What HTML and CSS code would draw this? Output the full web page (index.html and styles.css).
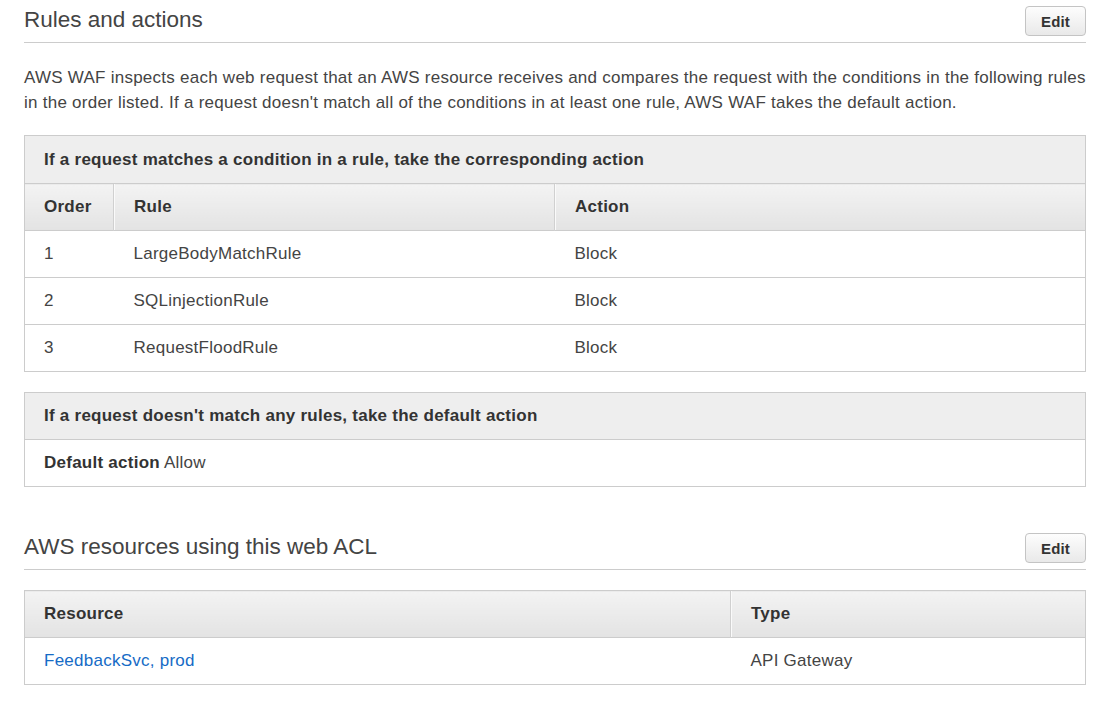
FILE: index.html
```html
<!DOCTYPE html>
<html>
<head>
<meta charset="utf-8">
<link rel="stylesheet" href="styles.css">
</head>
<body>
<div class="page">
  <section class="section">
    <div class="section-head">
      <h2 class="section-title">Rules and actions</h2>
      <button class="btn">Edit</button>
    </div>
    <p class="desc">AWS WAF inspects each web request that an AWS resource receives and compares the request with the conditions in the following rules in the order listed. If a request doesn't match all of the conditions in at least one rule, AWS WAF takes the default action.</p>
    <table class="grid">
      <thead>
        <tr><th class="caption" colspan="3">If a request matches a condition in a rule, take the corresponding action</th></tr>
        <tr class="cols">
          <th class="c-order">Order</th>
          <th class="c-rule">Rule</th>
          <th>Action</th>
        </tr>
      </thead>
      <tbody>
        <tr><td>1</td><td>LargeBodyMatchRule</td><td>Block</td></tr>
        <tr><td>2</td><td>SQLinjectionRule</td><td>Block</td></tr>
        <tr><td>3</td><td>RequestFloodRule</td><td>Block</td></tr>
      </tbody>
    </table>
    <table class="grid grid-default">
      <thead>
        <tr><th class="caption caption-sm">If a request doesn't match any rules, take the default action</th></tr>
      </thead>
      <tbody>
        <tr><td><b class="label">Default action</b> Allow</td></tr>
      </tbody>
    </table>
  </section>
  <section class="section section-second">
    <div class="section-head">
      <h2 class="section-title">AWS resources using this web ACL</h2>
      <button class="btn">Edit</button>
    </div>
    <table class="grid grid-res">
      <thead>
        <tr class="cols">
          <th class="c-res">Resource</th>
          <th>Type</th>
        </tr>
      </thead>
      <tbody>
        <tr><td><a class="link" href="#">FeedbackSvc, prod</a></td><td>API Gateway</td></tr>
      </tbody>
    </table>
  </section>
</div>
</body>
</html>
```
FILE: styles.css
```css
html, body {
  margin: 0;
  padding: 0;
  background: #fff;
}
body {
  font-family: "Liberation Sans", Arial, sans-serif;
  color: #444;
  font-size: 17px;
  letter-spacing: 0.25px;
}
.page {
  padding: 0 24px;
}
.section-head {
  display: flex;
  justify-content: space-between;
  align-items: center;
  height: 42px;
  border-bottom: 1px solid #ccc;
}
.section-title {
  margin: 0;
  font-size: 22.5px;
  letter-spacing: 0;
  font-weight: normal;
  color: #444;
  line-height: 32px;
  padding-bottom: 2px;
}
.btn {
  font-family: "Liberation Sans", Arial, sans-serif;
  font-size: 15px;
  letter-spacing: 0.2px;
  font-weight: bold;
  color: #333;
  width: 61px;
  height: 30px;
  border: 1px solid #c4c4c4;
  border-radius: 4px;
  background: linear-gradient(#fdfdfd, #e9e9e9);
  padding: 0;
}
.desc {
  margin: 22px 0 20px;
  line-height: 25px;
}
.grid {
  width: 100%;
  border-collapse: collapse;
  border: 1px solid #ccc;
  margin-bottom: 20px;
}
.grid th, .grid td {
  text-align: left;
  padding: 12px 19px;
  line-height: 22px;
  border-top: 1px solid #ccc;
}
.grid th + th, .grid td + td {
  padding-left: 20px;
}
.grid th {
  font-weight: bold;
  color: #333;
}
.caption {
  background: #eee;
  height: 23px;
}
.caption-sm {
  height: 22px;
}
.cols th {
  background: linear-gradient(#f3f3f3, #e3e3e3);
  height: 22px;
}
.cols th + th {
  border-left: 1px solid #d0d0d0;
  box-shadow: inset 1px 0 0 #fafafa;
}
.c-order {
  width: 50px;
}
.c-rule {
  width: 401px;
}
.label {
  color: #333;
}
.section-second {
  margin-top: 40px;
}
.grid-res {
  margin-top: 20px;
}
.c-res {
  width: 667px;
}
.link {
  color: #166bc6;
  text-decoration: none;
}
```
